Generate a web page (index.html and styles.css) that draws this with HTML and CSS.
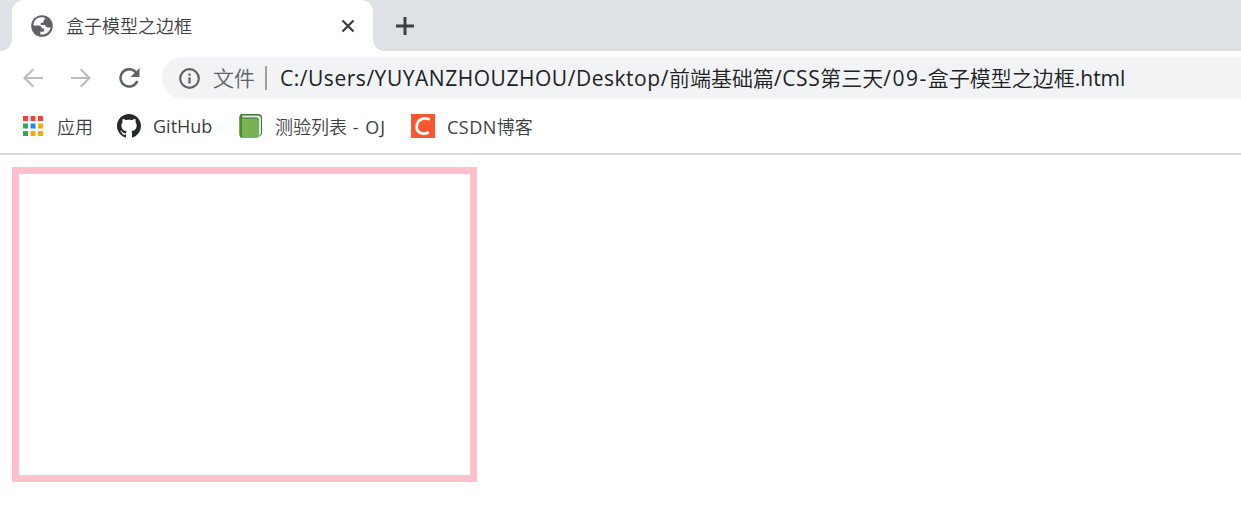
FILE: index.html
```html
<!DOCTYPE html>
<html lang="zh-CN">
<head>
    <meta charset="UTF-8">
    <title>盒子模型之边框</title>
    <link rel="stylesheet" href="styles.css">
</head>
<body>

<header>
    <div class="tab-strip">
        <div class="tab">
            <svg class="tab-icon" width="22" height="22" viewBox="0 0 22 22">
                <circle cx="11" cy="11" r="10.8" fill="#5f6368"/>
                <path d="M12.5 2.4C7 1.3 2.6 5 2.4 10.4h5c2.5 0 3.400 1.200 3.400 3h2.400v2.300q0 1-1.500 1H9.400v2.700c5 .8 9.200-2.300 10.200-6.900h-2.800c-1.800 0-2.500-.8-2.500-2.400H9.700V7.900c2.300 0 3-.5 3-1.800 0-1.500.8-2 2-2.500-.7-.6-1.300-.9-2.200-1.200z" fill="#fff"/>
            </svg>
            <span class="tab-title">盒子模型之边框</span>
            <svg class="tab-close" width="14" height="14" viewBox="0 0 14 14">
                <path d="M1.5 1.5l11 11M12.5 1.5l-11 11" stroke="#3c4043" stroke-width="2.3"/>
            </svg>
        </div>
        <svg class="new-tab" width="18" height="18" viewBox="0 0 18 18">
            <path d="M9 0v18M0 9h18" stroke="#3c4043" stroke-width="3"/>
        </svg>
    </div>

    <div class="toolbar">
        <svg class="nav-icon" width="20" height="20" viewBox="0 0 20 20">
            <path d="M20 10H2M10.3 1.2L1.5 10l8.8 8.8" fill="none" stroke="#babcbe" stroke-width="2.2"/>
        </svg>
        <svg class="nav-icon" width="20" height="20" viewBox="0 0 20 20">
            <path d="M0 10h18M9.7 1.2l8.8 8.8-8.8 8.8" fill="none" stroke="#babcbe" stroke-width="2.2"/>
        </svg>
        <svg class="nav-icon" width="21" height="20" viewBox="0 0 21 20">
            <path d="M17 4.4A8.7 8.7 0 1 0 18.3 13" fill="none" stroke="#5f6368" stroke-width="2.5"/>
            <path d="M20.5 0v9h-9z" fill="#5f6368"/>
        </svg>
        <div class="address">
            <svg class="info" width="21" height="21" viewBox="0 0 21 21">
                <circle cx="10.5" cy="10.5" r="9.3" fill="none" stroke="#5f6368" stroke-width="2.2"/>
                <path d="M10.5 9.3v6.2M10.5 5.5v2.2" stroke="#5f6368" stroke-width="2.2"/>
            </svg>
            <span class="scheme">文件</span>
            <span class="separator"></span>
            <span class="url"><span class="path">C:/Users/YUYANZHOUZHOU/Desktop/</span>前端基础篇<span class="css">/CSS</span>第三天<span class="num">/09-</span>盒子模型之边框<span class="ext">.html</span></span>
        </div>
    </div>

    <nav class="bookmarks">
        <a class="bookmark apps">
            <svg width="20" height="20" viewBox="0 0 20 20">
                <path d="M0 0h5v5H0zM7.5 0h5v5h-5zM15 0h5v5h-5z" fill="#f44336"/>
                <path d="M0 7.5h5v5H0zM0 15h5v5H0z" fill="#34a853"/>
                <path d="M7.5 7.5h5v5h-5z" fill="#1e88f5"/>
                <path d="M15 7.5h5v5h-5zM7.5 15h5v5h-5zM15 15h5v5h-5z" fill="#f9ab00"/>
            </svg>
            <span class="label">应用</span>
        </a>
        <a class="bookmark github">
            <svg width="24" height="24" viewBox="0 0 16 16">
                <path fill="#24292e" fill-rule="evenodd" d="M8 0C3.58 0 0 3.58 0 8c0 3.54 2.29 6.53 5.47 7.59.4.07.55-.17.55-.38 0-.19-.01-.82-.01-1.49-2.01.37-2.53-.49-2.69-.94-.09-.23-.48-.94-.82-1.13-.28-.15-.68-.52-.01-.53.63-.01 1.08.58 1.23.82.72 1.21 1.87.87 2.33.66.07-.52.28-.87.51-1.07-1.78-.2-3.64-.89-3.64-3.95 0-.87.31-1.59.82-2.15-.08-.2-.36-1.02.08-2.12 0 0 .67-.21 2.2.82.64-.18 1.32-.27 2-.27s1.36.09 2 .27c1.53-1.04 2.2-.82 2.2-.82.44 1.1.16 1.92.08 2.12.51.56.82 1.27.82 2.15 0 3.07-1.87 3.75-3.65 3.95.29.25.54.73.54 1.48 0 1.07-.01 1.93-.01 2.2 0 .21.15.46.55.38A8.01 8.01 0 0 0 16 8c0-4.42-3.58-8-8-8z"/>
            </svg>
            <span class="label"><span class="latin">GitHub</span></span>
        </a>
        <a class="bookmark oj">
            <svg width="24" height="24" viewBox="0 0 24 24">
                <path d="M3 0h16q4 0 4 4v15.500q0 2-3 3L3 23.500Q.5 23 .5 20V3Q.5 0 3 0z" fill="#3e7a24"/>
                <path d="M4 1.500h15q3 .3 3 3V19q0 2-2 3V6q0-2.500-2.500-2.500H5Q3 3.500 3 2.500q0-1 1-1z" fill="#dfe8ee"/>
                <path d="M3 4h14.500q2.500 0 2.500 2.500V21q0 3-3 3H4q-3 0-3-3V3q.5 1 2 1z" fill="#77b255"/>
                <path d="M3 4v20Q.5 23.500.5 21V2.500Q1 4 3 4z" fill="#4d8a31"/>
                <path d="M4 4.500h13.500q1.700.3 1.700 2.500" fill="none" stroke="#5c913b"/>
            </svg>
            <span class="label">测验列表<span class="latin"> - OJ</span></span>
        </a>
        <a class="bookmark csdn">
            <svg width="24" height="24" viewBox="0 0 24 24">
                <path d="M0 0h24v24H0z" fill="#fc5531"/>
                <path d="M18.7 5.600C13 2.800 6.400 5.500 5.700 12.200c-.6 6.500 5.500 9.100 12.200 6.200" fill="none" stroke="#fff" stroke-width="2.8"/>
            </svg>
            <span class="label"><span class="latin">CSDN</span>博客</span>
        </a>
    </nav>
</header>

<main>
    <div class="box"></div>
</main>

</body>
</html>
```
FILE: styles.css
```css
body {
    margin: 0;
    height: 510px;
    overflow: hidden;
    background: #fff;
    color: #3c4043;
    font-family: "Open Sans", "Noto Sans CJK SC", sans-serif;
    font-weight: 350;
    white-space: nowrap;
}

svg {
    display: block;
    flex-shrink: 0;
}

/* tabs */
.tab-strip {
    display: flex;
    align-items: center;
    height: 51px;
    padding-left: 12px;
    background: #dee1e6;
}

.tab {
    position: relative;
    display: flex;
    align-items: center;
    box-sizing: border-box;
    width: 361px;
    height: 51px;
    padding: 0 18px 0 19px;
    border-radius: 12px 12px 0 0;
    background: #fff;
}

.tab::before,
.tab::after {
    content: "";
    position: absolute;
    bottom: 0;
    width: 12px;
    height: 12px;
}

.tab::before {
    left: -12px;
    background: radial-gradient(circle at 0 0, transparent 11.5px, #fff 12.5px);
}

.tab::after {
    right: -12px;
    background: radial-gradient(circle at 100% 0, transparent 11.5px, #fff 12.5px);
}

.tab-title {
    flex: 1;
    margin-left: 13px;
    padding-bottom: 2px;
    font-size: 18px;
}

.new-tab {
    margin-left: 23px;
}

/* toolbar */
.toolbar {
    display: flex;
    align-items: center;
    height: 54px;
    padding-left: 23px;
}

.nav-icon {
    margin-right: 28px;
}

.nav-icon + .nav-icon + .nav-icon {
    margin-right: 22px;
}

.address {
    display: flex;
    flex: 1;
    align-items: center;
    height: 42px;
    padding-left: 17px;
    border-radius: 21px 0 0 21px;
    background: #f1f3f4;
    font-size: 21px;
}

.scheme {
    margin-left: 13px;
    padding-bottom: 3px;
    color: #5f6368;
}

.separator {
    width: 2px;
    height: 24px;
    margin: 0 13px 0 10px;
    background: #9aa0a6;
}

.url {
    padding-bottom: 2px;
    color: #202124;
}

.path,
.css,
.num,
.ext,
.latin {
    font-weight: 400;
}

.path {
    letter-spacing: 0.53px;
}

.css {
    letter-spacing: 0.6px;
}

.num {
    letter-spacing: 1.5px;
}

/* bookmarks */
.bookmarks {
    display: flex;
    align-items: center;
    height: 42px;
    padding: 0 0 6px 23px;
    border-bottom: 2px solid #dadada;
    font-size: 18px;
}

.bookmark {
    display: flex;
    align-items: center;
    height: 42px;
    margin-right: 24px;
}

.label {
    margin-left: 12px;
}

.apps .label {
    margin-left: 14px;
}

.github .label {
    width: 62px;
}

.oj .label {
    width: 112px;
}

.oj .latin {
    letter-spacing: 1px;
}

.csdn .latin {
    letter-spacing: 0.5px;
}

/* page */
main {
    padding: 12px;
}

.box {
    width: 451px;
    height: 301px;
    border: 7px solid pink;
}
```
